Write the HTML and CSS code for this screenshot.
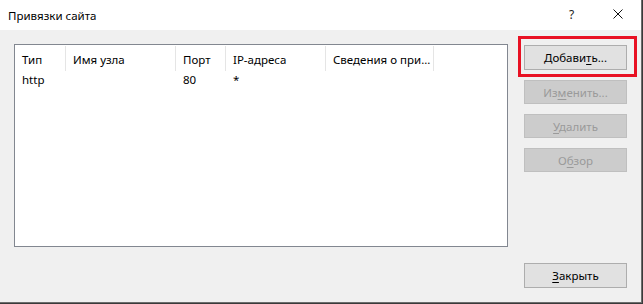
FILE: index.html
```html
<!DOCTYPE html>
<html lang="ru">
<head>
<meta charset="utf-8">
<title>Привязки сайта</title>
<link rel="stylesheet" href="styles.css">
</head>
<body>
<div class="window">
  <div class="titlebar">
    <span class="title">Привязки сайта</span>
    <span class="help">?</span>
    <span class="close-x">
      <svg width="10" height="10" viewBox="0 0 10 10"><path d="M0.5 0.5 L9.5 9.5 M9.5 0.5 L0.5 9.5" stroke="#111" stroke-width="1" fill="none"/></svg>
    </span>
  </div>
  <div class="content">
    <div class="list">
      <div class="header">
        <div class="col c1">Тип</div>
        <div class="col c2">Имя узла</div>
        <div class="col c3">Порт</div>
        <div class="col c4">IP-адреса</div>
        <div class="col c5">Сведения о при...</div>
      </div>
      <div class="row">
        <div class="cell c1">http</div>
        <div class="cell c2"></div>
        <div class="cell c3">80</div>
        <div class="cell c4">*</div>
        <div class="cell c5"></div>
      </div>
    </div>
    <div class="buttons">
      <div class="btn-wrap">
        <button class="btn">Добави<u>т</u>ь...</button>
        <div class="highlight"></div>
      </div>
      <button class="btn disabled">Из<u>м</u>енить...</button>
      <button class="btn disabled"><u>У</u>далить</button>
      <button class="btn disabled">О<u>б</u>зор</button>
      <button class="btn close"><u>З</u>акрыть</button>
    </div>
  </div>
</div>
</body>
</html>
```
FILE: styles.css
```css
html, body {
  margin: 0;
  padding: 0;
}
body {
  background: #3a3a3a;
  width: 643px;
  height: 304px;
  overflow: hidden;
  font-family: "Noto Sans", "Open Sans", sans-serif;
  font-size: 11.5px;
  color: #000;
}
.window {
  width: 641px;
  height: 302px;
  background: #f0f0f0;
  border-right: 1px solid #6d6d6d;
  border-bottom: 1px solid #6d6d6d;
  display: flex;
  flex-direction: column;
}
.titlebar {
  height: 30px;
  background: #fff;
  display: flex;
  align-items: center;
  position: relative;
  flex: none;
}
.title {
  margin-left: 8px;
  padding-top: 2px;
  line-height: 16px;
}
.help {
  position: absolute;
  left: 569px;
  top: 7px;
  font-size: 12px;
  line-height: 16px;
  color: #222;
}
.close-x {
  position: absolute;
  left: 613px;
  top: 9px;
  width: 10px;
  height: 10px;
  display: block;
}
.close-x svg { display: block; }
.content {
  flex: 1;
  display: flex;
  padding: 14px 14px 14px 14px;
}
.list {
  width: 492px;
  height: 201px;
  background: #fff;
  border: 1px solid #828790;
  flex: none;
}
.header, .row {
  display: flex;
}
.header {
  height: 25px;
  margin-top: 1px;
}
.col {
  border-right: 1px solid #e5e5e5;
  padding-left: 7px;
  line-height: 25px;
  padding-top: 1px;
  box-sizing: border-box;
  white-space: nowrap;
}
.row {
  height: 17px;
}
.cell {
  padding-left: 7px;
  line-height: 17px;
  box-sizing: border-box;
  white-space: nowrap;
}
.c1 { width: 51px; }
.c2 { width: 110px; }
.c3 { width: 50px; }
.c4 { width: 100px; }
.c5 { width: 108px; }
.buttons {
  margin-left: 16px;
  display: flex;
  flex-direction: column;
  gap: 10px;
  padding-top: 1px;
  flex: 1;
}
.btn-wrap {
  position: relative;
  height: 25px;
}
.btn {
  width: 103px;
  height: 24px;
  background: #e1e1e1;
  border: 1px solid #adadad;
  font-family: inherit;
  font-size: 11.5px;
  color: #000;
  padding: 0;
  margin: 0;
  display: block;
}
.btn-wrap .btn { height: 25px; }
.btn u { text-decoration: underline; text-underline-offset: 2px; }
.btn.disabled {
  background: #cccccc;
  border-color: #bfbfbf;
  color: #9a9a9a;
}
.btn.close {
  margin-top: auto;
  height: 25px;
}
.highlight {
  position: absolute;
  left: -6px;
  top: -9px;
  width: 113px;
  height: 35px;
  border: 3px solid #e81123;
}
```
